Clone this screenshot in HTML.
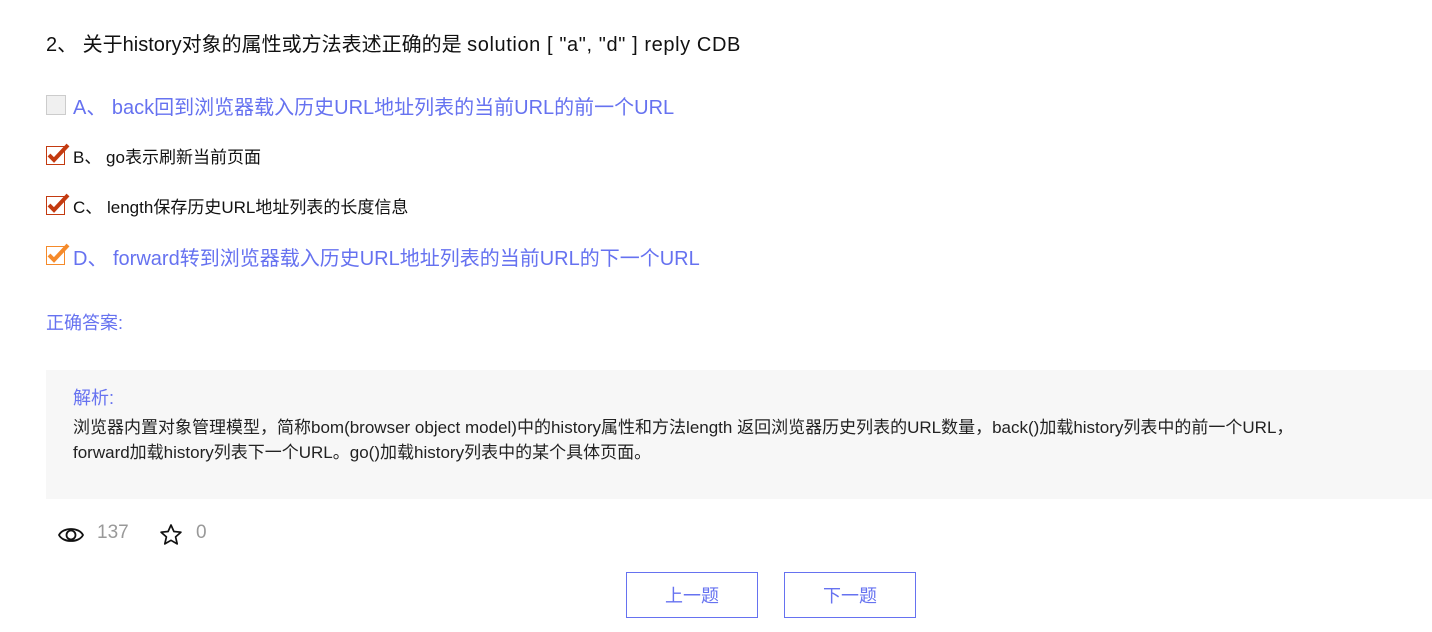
<!DOCTYPE html>
<html><head><meta charset="utf-8"><style>
body{margin:0;width:1432px;height:632px;background:#fff;font-family:"Liberation Sans","Noto Sans CJK SC",sans-serif;position:relative;overflow:hidden}
.a{position:absolute;white-space:nowrap}
.cb{position:absolute;left:46px;width:18px;height:18px;border:1px solid #ccc;background:#f0f0f0}
.blue{color:#6672f0}
.btn{position:absolute;top:572px;width:132px;height:46px;border:1px solid #6672f0;box-sizing:border-box;color:#6672f0;font-size:18px;text-align:center;line-height:46px}
</style></head><body>
<div class="a" style="left:46px;top:28px;font-size:20px;color:#111">2、 关于history对象的属性或方法表述正确的是 <span style="letter-spacing:0.6px">solution [ "a", "d" ] reply CDB</span></div>

<div class="cb" style="top:95px"></div>
<div class="a blue" style="left:73px;top:91px;font-size:20px">A、 back回到浏览器载入历史URL地址列表的当前URL的前一个URL</div>

<svg class="a" style="left:46px;top:143px" width="26" height="22"><rect x="0.5" y="3.5" width="18" height="18" fill="#fff" stroke="#c33a10"/><path d="M3 12l5 5L22 2" fill="none" stroke="#c33a10" stroke-width="4"/></svg>
<div class="a" style="left:73px;top:143px;font-size:17px;color:#111">B、 go表示刷新当前页面</div>

<svg class="a" style="left:46px;top:193px" width="26" height="22"><rect x="0.5" y="3.5" width="18" height="18" fill="#fff" stroke="#c33a10"/><path d="M3 12l5 5L22 2" fill="none" stroke="#c33a10" stroke-width="4"/></svg>
<div class="a" style="left:73px;top:193px;font-size:17px;color:#111">C、 length保存历史URL地址列表的长度信息</div>

<svg class="a" style="left:46px;top:243px" width="26" height="22"><rect x="0.5" y="3.5" width="18" height="18" fill="#fff" stroke="#f58a2a"/><path d="M3 12l5 5L22 2" fill="none" stroke="#f58a2a" stroke-width="4"/></svg>
<div class="a blue" style="left:73px;top:242px;font-size:20px">D、 forward转到浏览器载入历史URL地址列表的当前URL的下一个URL</div>

<div class="a blue" style="left:46px;top:309px;font-size:18px">正确答案:</div>

<div class="a" style="left:46px;top:370px;width:1386px;height:129px;background:#f7f7f7"></div>
<div class="a blue" style="left:73px;top:384px;font-size:18px">解析:</div>
<div class="a" style="left:73px;top:415px;font-size:17px;color:#222;line-height:25px">浏览器内置对象管理模型，简称bom(browser object model)中的history属性和方法length 返回浏览器历史列表的URL数量，back()加载history列表中的前一个URL，<br>forward加载history列表下一个URL。go()加载history列表中的某个具体页面。</div>

<svg class="a" style="left:58px;top:524px" width="26" height="22"><path d="M1 11C5 3 21 3 25 11C21 19 5 19 1 11Z" fill="none" stroke="#111" stroke-width="1.8"/><circle cx="13" cy="11" r="4.5" fill="none" stroke="#111" stroke-width="1.8"/></svg>
<div class="a" style="left:97px;top:522px;font-size:19px;color:#999">137</div>
<svg class="a" style="left:159px;top:523px" width="24" height="23"><path d="M12 2l2.9 6.5 7 .7-5.3 4.7 1.6 7L12 17.3 5.8 20.9l1.6-7L2.1 9.2l7-.7z" fill="none" stroke="#111" stroke-width="1.7" stroke-linejoin="round"/></svg>
<div class="a" style="left:196px;top:522px;font-size:19px;color:#999">0</div>

<div class="btn" style="left:626px">上一题</div>
<div class="btn" style="left:784px">下一题</div>
</body></html>
